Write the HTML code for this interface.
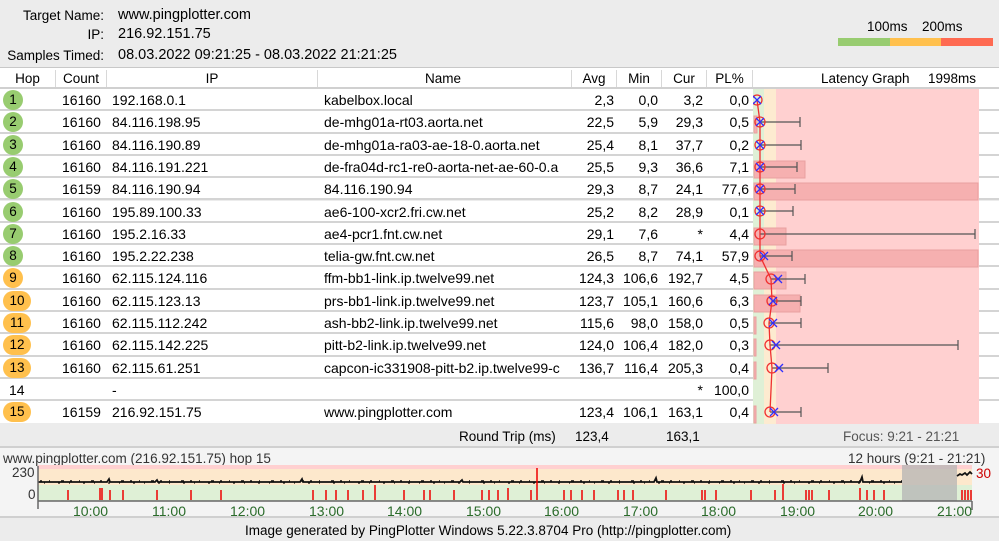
<!DOCTYPE html>
<html><head><meta charset="utf-8"><style>
*{margin:0;padding:0;box-sizing:border-box}
body{width:999px;height:541px;overflow:hidden;background:#ececec;font-family:"Liberation Sans","DejaVu Sans",sans-serif;font-size:13px;color:#000;position:relative}
.a{position:absolute;white-space:nowrap}
.r{text-align:right}
.hdr{position:absolute;left:0;top:67px;width:999px;height:22px;background:#fff;border-top:1px solid #c8c8c8;border-bottom:2px solid #d0d0d0;font-size:13.5px}
.hdr div{position:absolute;top:2px;height:17px;line-height:17px;border-right:1px solid #d8d8d8}
.row{position:absolute;left:0;width:999px;height:22.3px;background:#fff;border-bottom:2px solid #d4d4d4;font-size:14px}
.row div{position:absolute;top:3px;line-height:16px;white-space:nowrap}
.b{position:absolute;top:1px !important;left:3px;height:20px;border-radius:10px;text-align:center;line-height:20px !important;font-size:13.5px}
.g{background:#98cc70}.o{background:#ffc04d}
.t{position:absolute;top:503px;color:#2a6b2a;font-size:14px}
</style></head><body>
<div class="a r" style="left:0;width:104px;top:8px;font-size:13.5px">Target Name:</div>
<div class="a" style="left:118px;top:7px;font-size:14.5px">www.pingplotter.com</div>
<div class="a r" style="left:0;width:104px;top:27px;font-size:13.5px">IP:</div>
<div class="a" style="left:118px;top:26px;font-size:14.5px">216.92.151.75</div>
<div class="a r" style="left:0;width:104px;top:48px;font-size:13.5px">Samples Timed:</div>
<div class="a" style="left:118px;top:47px;font-size:14.5px">08.03.2022 09:21:25 - 08.03.2022 21:21:25</div>
<div class="a" style="left:867px;top:19px;font-size:13.5px">100ms</div>
<div class="a" style="left:922px;top:19px;font-size:13.5px">200ms</div>
<div class="a" style="left:838px;top:38px;width:52px;height:8px;background:#98cc70"></div>
<div class="a" style="left:890px;top:38px;width:51px;height:8px;background:#ffc04d"></div>
<div class="a" style="left:941px;top:38px;width:52px;height:8px;background:#fe6a52"></div>

<div class="hdr">
<div style="left:0;width:56px;text-align:center">Hop</div>
<div style="left:56px;width:51px;text-align:center">Count</div>
<div style="left:107px;width:211px;text-align:center">IP</div>
<div style="left:318px;width:254px;text-align:right;padding-right:110px">Name</div>
<div style="left:572px;width:45px;text-align:center">Avg</div>
<div style="left:617px;width:45px;text-align:center">Min</div>
<div style="left:662px;width:45px;text-align:center">Cur</div>
<div style="left:707px;width:46px;text-align:center">PL%</div>
<div style="left:753px;width:246px;border:none"><span style="position:absolute;left:68px">Latency Graph</span><span style="position:absolute;left:175px">1998ms</span></div>
</div>

<div class="row" style="top:89px"><div class="b g" style="width:20px">1</div><div style="left:62px">16160</div><div style="left:112px">192.168.0.1</div><div style="left:324px">kabelbox.local</div><div class="r" style="left:572px;width:42px">2,3</div><div class="r" style="left:617px;width:41px">0,0</div><div class="r" style="left:662px;width:41px">3,2</div><div class="r" style="left:707px;width:42px">0,0</div></div>
<div class="row" style="top:111.3px"><div class="b g" style="width:20px">2</div><div style="left:62px">16160</div><div style="left:112px">84.116.198.95</div><div style="left:324px">de-mhg01a-rt03.aorta.net</div><div class="r" style="left:572px;width:42px">22,5</div><div class="r" style="left:617px;width:41px">5,9</div><div class="r" style="left:662px;width:41px">29,3</div><div class="r" style="left:707px;width:42px">0,5</div></div>
<div class="row" style="top:133.6px"><div class="b g" style="width:20px">3</div><div style="left:62px">16160</div><div style="left:112px">84.116.190.89</div><div style="left:324px">de-mhg01a-ra03-ae-18-0.aorta.net</div><div class="r" style="left:572px;width:42px">25,4</div><div class="r" style="left:617px;width:41px">8,1</div><div class="r" style="left:662px;width:41px">37,7</div><div class="r" style="left:707px;width:42px">0,2</div></div>
<div class="row" style="top:155.9px"><div class="b g" style="width:20px">4</div><div style="left:62px">16160</div><div style="left:112px">84.116.191.221</div><div style="left:324px;width:245px;overflow:hidden">de-fra04d-rc1-re0-aorta-net-ae-60-0.a</div><div class="r" style="left:572px;width:42px">25,5</div><div class="r" style="left:617px;width:41px">9,3</div><div class="r" style="left:662px;width:41px">36,6</div><div class="r" style="left:707px;width:42px">7,1</div></div>
<div class="row" style="top:178.2px"><div class="b g" style="width:20px">5</div><div style="left:62px">16159</div><div style="left:112px">84.116.190.94</div><div style="left:324px">84.116.190.94</div><div class="r" style="left:572px;width:42px">29,3</div><div class="r" style="left:617px;width:41px">8,7</div><div class="r" style="left:662px;width:41px">24,1</div><div class="r" style="left:707px;width:42px">77,6</div></div>
<div class="row" style="top:200.5px"><div class="b g" style="width:20px">6</div><div style="left:62px">16160</div><div style="left:112px">195.89.100.33</div><div style="left:324px">ae6-100-xcr2.fri.cw.net</div><div class="r" style="left:572px;width:42px">25,2</div><div class="r" style="left:617px;width:41px">8,2</div><div class="r" style="left:662px;width:41px">28,9</div><div class="r" style="left:707px;width:42px">0,1</div></div>
<div class="row" style="top:222.8px"><div class="b g" style="width:20px">7</div><div style="left:62px">16160</div><div style="left:112px">195.2.16.33</div><div style="left:324px">ae4-pcr1.fnt.cw.net</div><div class="r" style="left:572px;width:42px">29,1</div><div class="r" style="left:617px;width:41px">7,6</div><div class="r" style="left:662px;width:41px">*</div><div class="r" style="left:707px;width:42px">4,4</div></div>
<div class="row" style="top:245.1px"><div class="b g" style="width:20px">8</div><div style="left:62px">16160</div><div style="left:112px">195.2.22.238</div><div style="left:324px">telia-gw.fnt.cw.net</div><div class="r" style="left:572px;width:42px">26,5</div><div class="r" style="left:617px;width:41px">8,7</div><div class="r" style="left:662px;width:41px">74,1</div><div class="r" style="left:707px;width:42px">57,9</div></div>
<div class="row" style="top:267.4px"><div class="b o" style="width:20px">9</div><div style="left:62px">16160</div><div style="left:112px">62.115.124.116</div><div style="left:324px">ffm-bb1-link.ip.twelve99.net</div><div class="r" style="left:572px;width:42px">124,3</div><div class="r" style="left:617px;width:41px">106,6</div><div class="r" style="left:662px;width:41px">192,7</div><div class="r" style="left:707px;width:42px">4,5</div></div>
<div class="row" style="top:289.7px"><div class="b o" style="width:28px">10</div><div style="left:62px">16160</div><div style="left:112px">62.115.123.13</div><div style="left:324px">prs-bb1-link.ip.twelve99.net</div><div class="r" style="left:572px;width:42px">123,7</div><div class="r" style="left:617px;width:41px">105,1</div><div class="r" style="left:662px;width:41px">160,6</div><div class="r" style="left:707px;width:42px">6,3</div></div>
<div class="row" style="top:312px"><div class="b o" style="width:28px">11</div><div style="left:62px">16160</div><div style="left:112px">62.115.112.242</div><div style="left:324px">ash-bb2-link.ip.twelve99.net</div><div class="r" style="left:572px;width:42px">115,6</div><div class="r" style="left:617px;width:41px">98,0</div><div class="r" style="left:662px;width:41px">158,0</div><div class="r" style="left:707px;width:42px">0,5</div></div>
<div class="row" style="top:334.3px"><div class="b o" style="width:28px">12</div><div style="left:62px">16160</div><div style="left:112px">62.115.142.225</div><div style="left:324px">pitt-b2-link.ip.twelve99.net</div><div class="r" style="left:572px;width:42px">124,0</div><div class="r" style="left:617px;width:41px">106,4</div><div class="r" style="left:662px;width:41px">182,0</div><div class="r" style="left:707px;width:42px">0,3</div></div>
<div class="row" style="top:356.6px"><div class="b o" style="width:28px">13</div><div style="left:62px">16160</div><div style="left:112px">62.115.61.251</div><div style="left:324px;width:245px;overflow:hidden">capcon-ic331908-pitt-b2.ip.twelve99-c</div><div class="r" style="left:572px;width:42px">136,7</div><div class="r" style="left:617px;width:41px">116,4</div><div class="r" style="left:662px;width:41px">205,3</div><div class="r" style="left:707px;width:42px">0,4</div></div>
<div class="row" style="top:378.9px"><div style="left:9px">14</div><div style="left:112px">-</div><div class="r" style="left:662px;width:41px">*</div><div class="r" style="left:707px;width:42px">100,0</div></div>
<div class="row" style="top:401.2px;border-bottom:none"><div class="b o" style="width:28px">15</div><div style="left:62px">16159</div><div style="left:112px">216.92.151.75</div><div style="left:324px">www.pingplotter.com</div><div class="r" style="left:572px;width:42px">123,4</div><div class="r" style="left:617px;width:41px">106,1</div><div class="r" style="left:662px;width:41px">163,1</div><div class="r" style="left:707px;width:42px">0,4</div></div>

<svg class="a" style="left:753px;top:89px" width="246" height="335" viewBox="753 89 246 335">
<rect x="753" y="89" width="11" height="335" fill="#dff0d6"/>
<rect x="764" y="89" width="12" height="335" fill="#fdebd0"/>
<rect x="776" y="89" width="203" height="335" fill="#ffd0d0"/>
<g fill="#f6b0b0" stroke="#e8a0a0" stroke-width="1">
<rect x="754" y="161" width="51" height="17"/><rect x="754" y="183" width="224" height="17"/>
<rect x="754" y="228" width="32" height="17"/><rect x="754" y="250" width="224" height="17"/>
<rect x="754" y="272" width="32" height="17"/><rect x="754" y="295" width="46" height="17"/>
<rect x="754" y="116" width="3" height="17"/><rect x="754" y="317" width="2" height="17"/><rect x="754" y="339" width="2" height="17"/><rect x="754" y="362" width="2" height="17"/><rect x="754" y="406" width="2" height="17"/>
</g>
<g stroke="#555" stroke-width="1.2" fill="none">
<path d="M760 122H800M800 117V127M760 145H801M801 140V150M760 167H797M797 162V172M760 189H795M795 184V194M760 211H793M793 206V216M760 234H975M975 229V239M760 256H792M792 251V261M771 279H805M805 274V284M772 301H801M801 296V306M769 323H801M801 318V328M770 345H958M958 340V350M772 368H828M828 363V373M770 412H801M801 407V417"/>
</g>
<polyline fill="none" stroke="#f03030" stroke-width="1.3" points="757,100 760,122 760,145 760,167 760,189 760,211 760,234 760,256 771,279 772,301 769,323 770,345 772,368 770,412"/>
<g fill="none" stroke="#f03030" stroke-width="1.3">
<circle cx="757" cy="100" r="5"/><circle cx="760" cy="122" r="5"/><circle cx="760" cy="145" r="5"/><circle cx="760" cy="167" r="5"/><circle cx="760" cy="189" r="5"/><circle cx="760" cy="211" r="5"/><circle cx="760" cy="234" r="5"/><circle cx="760" cy="256" r="5"/><circle cx="771" cy="279" r="5"/><circle cx="772" cy="301" r="5"/><circle cx="769" cy="323" r="5"/><circle cx="770" cy="345" r="5"/><circle cx="772" cy="368" r="5"/><circle cx="770" cy="412" r="5"/>
</g>
<g stroke="#3030ff" stroke-width="1.3">
<path d="M753 96l8 8M761 96l-8 8M756 118l8 8M764 118l-8 8M756 141l8 8M764 141l-8 8M756 163l8 8M764 163l-8 8M756 185l8 8M764 185l-8 8M756 207l8 8M764 207l-8 8M760 252l8 8M768 252l-8 8M774 275l8 8M782 275l-8 8M769 297l8 8M777 297l-8 8M769 319l8 8M777 319l-8 8M772 341l8 8M780 341l-8 8M775 364l8 8M783 364l-8 8M770 408l8 8M778 408l-8 8"/>
</g>
</svg>

<div class="a" style="left:0;top:424px;width:999px;height:24px;border-bottom:2px solid #d0d0d0"></div>
<div class="a" style="left:459px;top:429px;font-size:13.5px">Round Trip (ms)</div>
<div class="a" style="left:575px;top:429px;font-size:13.5px">123,4</div>
<div class="a" style="left:666px;top:429px;font-size:13.5px">163,1</div>
<div class="a" style="left:843px;top:429px;color:#555;font-size:13.5px">Focus: 9:21 - 21:21</div>

<div class="a" style="left:0;top:448px;width:999px;height:70px;background:#f4f4f4;border-bottom:2px solid #d0d0d0"></div>
<div class="a" style="left:3px;top:451px;color:#333;font-size:13.5px">www.pingplotter.com (216.92.151.75) hop 15</div>
<div class="a" style="left:848px;top:451px;color:#333;font-size:13.5px">12 hours (9:21 - 21:21)</div>
<div class="a" style="left:12px;top:465px;color:#333;font-size:13.5px">230</div>
<div class="a" style="left:28px;top:487px;color:#333;font-size:13.5px">0</div>
<div class="a" style="left:976px;top:466px;color:#c00;font-size:13.5px">30</div>
<svg class="a" style="left:0;top:448px" width="999" height="70" viewBox="0 448 999 70">
<rect x="38" y="465" width="934" height="4" fill="#ffd0d0"/>
<rect x="38" y="469" width="934" height="16" fill="#fde8cc"/>
<rect x="38" y="485" width="934" height="16" fill="#dff0d6"/>
<rect x="902" y="465" width="55" height="36" fill="#b4b4b4" opacity=".75"/>
<path d="M38 482H107l2 -3 1 3H155l2-2 1 2H300l2 -3 1 3H460l2-2 1 2H654l2-4 1 4H860l2 -5 1 5H902M957 476l3 -2 2 1 3 -2 2 2 3-3 2 2" stroke="#111" stroke-width="1.8" fill="none"/>
<path d="M40 481H902" stroke="#111" stroke-width="1.5" stroke-dasharray="2 7 1 11 3 6" fill="none"/>
<path d="M44 483H902" stroke="#111" stroke-width="1.2" stroke-dasharray="1 13 2 9" fill="none"/>
<g stroke="#e00" stroke-width="1.5">
<path d="M68 490V500M100 488V500M102 488V500M110 490V500M123 490V500M157 490V500M191 490V500M221 490V500M313 490V500M326 490V500M336 490V500M348 490V500M363 490V500M375 485V500M404 490V500M424 490V500M430 490V500M454 490V500M482 490V500M489 490V500M498 490V500M508 488V500M531 490V500M537 468V500M564 490V500M571 490V500M582 490V500M594 490V500M618 490V500M624 490V500M633 490V500M666 490V500M702 490V500M705 490V500M716 490V500M751 490V500M775 490V500M783 484V500M806 490V500M809 490V500M812 490V500M829 490V500M860 488V500M867 490V500M874 490V500M884 490V500M962 490V500M965 490V500M968 490V500M971 490V500"/>
</g>
<path d="M38 466V509M38 501H972M972 501V510" stroke="#666" stroke-width="1.5" fill="none"/>
</svg>
<div class="t" style="left:73px">10:00</div>
<div class="t" style="left:152px">11:00</div>
<div class="t" style="left:230px">12:00</div>
<div class="t" style="left:309px">13:00</div>
<div class="t" style="left:387px">14:00</div>
<div class="t" style="left:466px">15:00</div>
<div class="t" style="left:544px">16:00</div>
<div class="t" style="left:623px">17:00</div>
<div class="t" style="left:701px">18:00</div>
<div class="t" style="left:780px">19:00</div>
<div class="t" style="left:858px">20:00</div>
<div class="t" style="left:937px">21:00</div>
<div class="a" style="left:245px;top:523px;font-size:13.5px">Image generated by PingPlotter Windows 5.22.3.8704 Pro (http://pingplotter.com)</div>
</body></html>
